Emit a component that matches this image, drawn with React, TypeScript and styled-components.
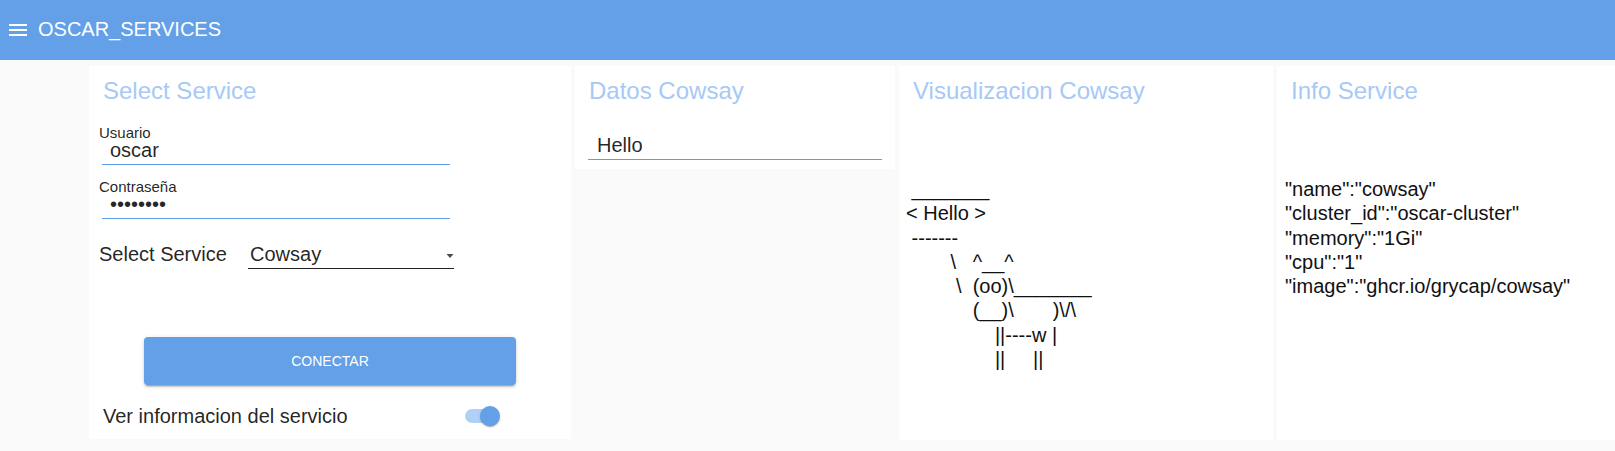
import { FC } from 'react';
import styled, { createGlobalStyle } from 'styled-components';

// ========== データ ==========

const COW_LINES = [
  ' _______',
  '< Hello >',
  ' -------',
  '        \\   ^__^',
  '         \\  (oo)\\_______',
  '            (__)\\       )\\/\\',
  '                ||----w |',
  '                ||     ||',
];

const SERVICE_INFO = [
  '"name":"cowsay"',
  '"cluster_id":"oscar-cluster"',
  '"memory":"1Gi"',
  '"cpu":"1"',
  '"image":"ghcr.io/grycap/cowsay"',
];

const PRIMARY = '#63a0e8';

// ========== コンポーネント ==========

const MenuIcon: FC = () => (
  <svg width="24" height="24" viewBox="0 0 24 24" fill="#fff" aria-hidden>
    <path d="M3 18h18v-2H3v2zm0-5h18v-2H3v2zm0-7v2h18V6H3z" />
  </svg>
);

const ArrowDrop: FC = () => (
  <svg width="8" height="4" viewBox="0 0 8 4" aria-hidden>
    <path d="M0.5 0h7L4 4z" fill="rgba(0,0,0,0.7)" />
  </svg>
);

export default function App() {
  return (
    <>
      <GlobalStyle />
      <AppBar>
        <MenuButton>
          <MenuIcon />
        </MenuButton>
        <Brand>OSCAR_SERVICES</Brand>
      </AppBar>

      <Content>
        <Panel $width="482px" $height="373px">
          <Title>Select Service</Title>
          <FieldLabel>Usuario</FieldLabel>
          <TextInput defaultValue="oscar" readOnly />
          <FieldLabel $gap={15}>Contraseña</FieldLabel>
          <TextInput type="password" defaultValue="oscar123" readOnly />

          <SelectRow>
            <SelectLabel>Select Service</SelectLabel>
            <SelectBox>
              <span>Cowsay</span>
              <ArrowDrop />
            </SelectBox>
          </SelectRow>

          <ConnectButton type="button">Conectar</ConnectButton>

          <SwitchRow>
            <SwitchLabel>Ver informacion del servicio</SwitchLabel>
            <SwitchRoot>
              <SwitchTrack />
              <SwitchThumb />
            </SwitchRoot>
          </SwitchRow>
        </Panel>

        <Panel $width="320px">
          <Title>Datos Cowsay</Title>
          <DataInput defaultValue="Hello" readOnly />
        </Panel>

        <Panel $width="374px" $height="374px">
          <Title>Visualizacion Cowsay</Title>
          <Ascii $indent={7}>{COW_LINES.join('\n')}</Ascii>
        </Panel>

        <Panel $grow $height="374px">
          <Title>Info Service</Title>
          <Ascii $indent={8}>{SERVICE_INFO.join('\n')}</Ascii>
        </Panel>
      </Content>
    </>
  );
}

// ========== スタイル ==========

const GlobalStyle = createGlobalStyle`
  html, body {
    margin: 0;
    padding: 0;
    background: #fafafa;
    overflow: hidden;
  }
  body {
    font-family: "Liberation Sans", Arial, sans-serif;
    color: rgba(0, 0, 0, 0.87);
  }
`;

const AppBar = styled.header`
  display: flex;
  align-items: center;
  height: 60px;
  padding: 0 0 2px 6px;
  box-sizing: border-box;
  background: ${PRIMARY};
`;

const MenuButton = styled.span`
  display: flex;
  width: 24px;
  height: 24px;
  margin-top: 1px;
`;

const Brand = styled.h1`
  margin: 0 0 0 8px;
  font-size: 20px;
  font-weight: 400;
  line-height: 23px;
  color: #fff;
`;

const Content = styled.main`
  display: flex;
  align-items: flex-start;
  gap: 4px;
  padding: 6px 0 0 89px;
`;

const Panel = styled.section<{ $width?: string; $height?: string; $grow?: boolean }>`
  display: flex;
  flex-direction: column;
  flex: ${(p) => (p.$grow ? '1 1 auto' : `0 0 ${p.$width}`)};
  height: ${(p) => p.$height ?? 'auto'};
  padding-top: 8px;
  box-sizing: border-box;
  background: #fff;
`;

const Title = styled.h2`
  margin: 0;
  padding: 1px 0 0 14px;
  height: 32px;
  font-size: 24px;
  font-weight: 400;
  line-height: 32px;
  color: #a6c9f6;
`;

const FieldLabel = styled.label<{ $gap?: number }>`
  display: block;
  margin: ${(p) => p.$gap ?? 19}px 0 0 10px;
  height: 13px;
  font-size: 15px;
  line-height: 13px;
  color: rgba(0, 0, 0, 0.87);
`;

const TextInput = styled.input`
  display: block;
  width: 348px;
  height: 26px;
  margin-left: 13px;
  padding: 0 0 3px 8px;
  box-sizing: border-box;
  border: none;
  border-bottom: 1px solid #5f9de4;
  background: transparent;
  font-family: inherit;
  font-size: 20px;
  color: rgba(0, 0, 0, 0.87);
  outline: none;
`;

const DataInput = styled(TextInput)`
  width: auto;
  margin: 27px 13px 9px;
  padding-left: 9px;
`;

const SelectRow = styled.div`
  display: flex;
  align-items: flex-start;
  margin: 24px 0 0 10px;
`;

const SelectLabel = styled.span`
  flex: 0 0 149px;
  font-size: 20px;
  line-height: 23px;
`;

const SelectBox = styled.div`
  display: flex;
  align-items: center;
  justify-content: space-between;
  width: 206px;
  padding: 0 0 2px 2px;
  box-sizing: border-box;
  border-bottom: 1px solid rgba(0, 0, 0, 0.87);
  font-size: 20px;
  line-height: 23px;

  svg {
    margin: 2px 0 0 0;
  }
`;

const ConnectButton = styled.button`
  display: block;
  width: 372px;
  height: 48px;
  margin: 68px auto 0;
  border: none;
  border-radius: 4px;
  background: ${PRIMARY};
  color: #fff;
  font-family: inherit;
  font-size: 14px;
  text-transform: uppercase;
  box-shadow: 0 3px 1px -2px rgba(0,0,0,0.2), 0 2px 2px 0 rgba(0,0,0,0.14), 0 1px 5px 0 rgba(0,0,0,0.12);
  cursor: pointer;
`;

const SwitchRow = styled.div`
  display: flex;
  align-items: center;
  justify-content: space-between;
  width: 408px;
  height: 38px;
  margin: 12px 0 0 14px;
`;

const SwitchLabel = styled.span`
  font-size: 20px;
  line-height: 23px;
`;

const SwitchRoot = styled.span`
  position: relative;
  display: inline-block;
  width: 58px;
  height: 38px;
`;

const SwitchTrack = styled.span`
  position: absolute;
  left: 12px;
  top: 12px;
  width: 34px;
  height: 14px;
  border-radius: 7px;
  background: #b1d0f5;
`;

const SwitchThumb = styled.span`
  position: absolute;
  left: 27px;
  top: 9px;
  width: 20px;
  height: 20px;
  border-radius: 50%;
  background: ${PRIMARY};
  box-shadow: 0 2px 1px -1px rgba(0,0,0,0.2), 0 1px 1px 0 rgba(0,0,0,0.14), 0 1px 3px 0 rgba(0,0,0,0.12);
`;

const Ascii = styled.pre<{ $indent: number }>`
  margin: 70px 0 0 ${(p) => p.$indent}px;
  font-family: "Liberation Sans", Arial, sans-serif;
  font-size: 20px;
  line-height: 24.3px;
  white-space: pre;
  color: #111;
`;
